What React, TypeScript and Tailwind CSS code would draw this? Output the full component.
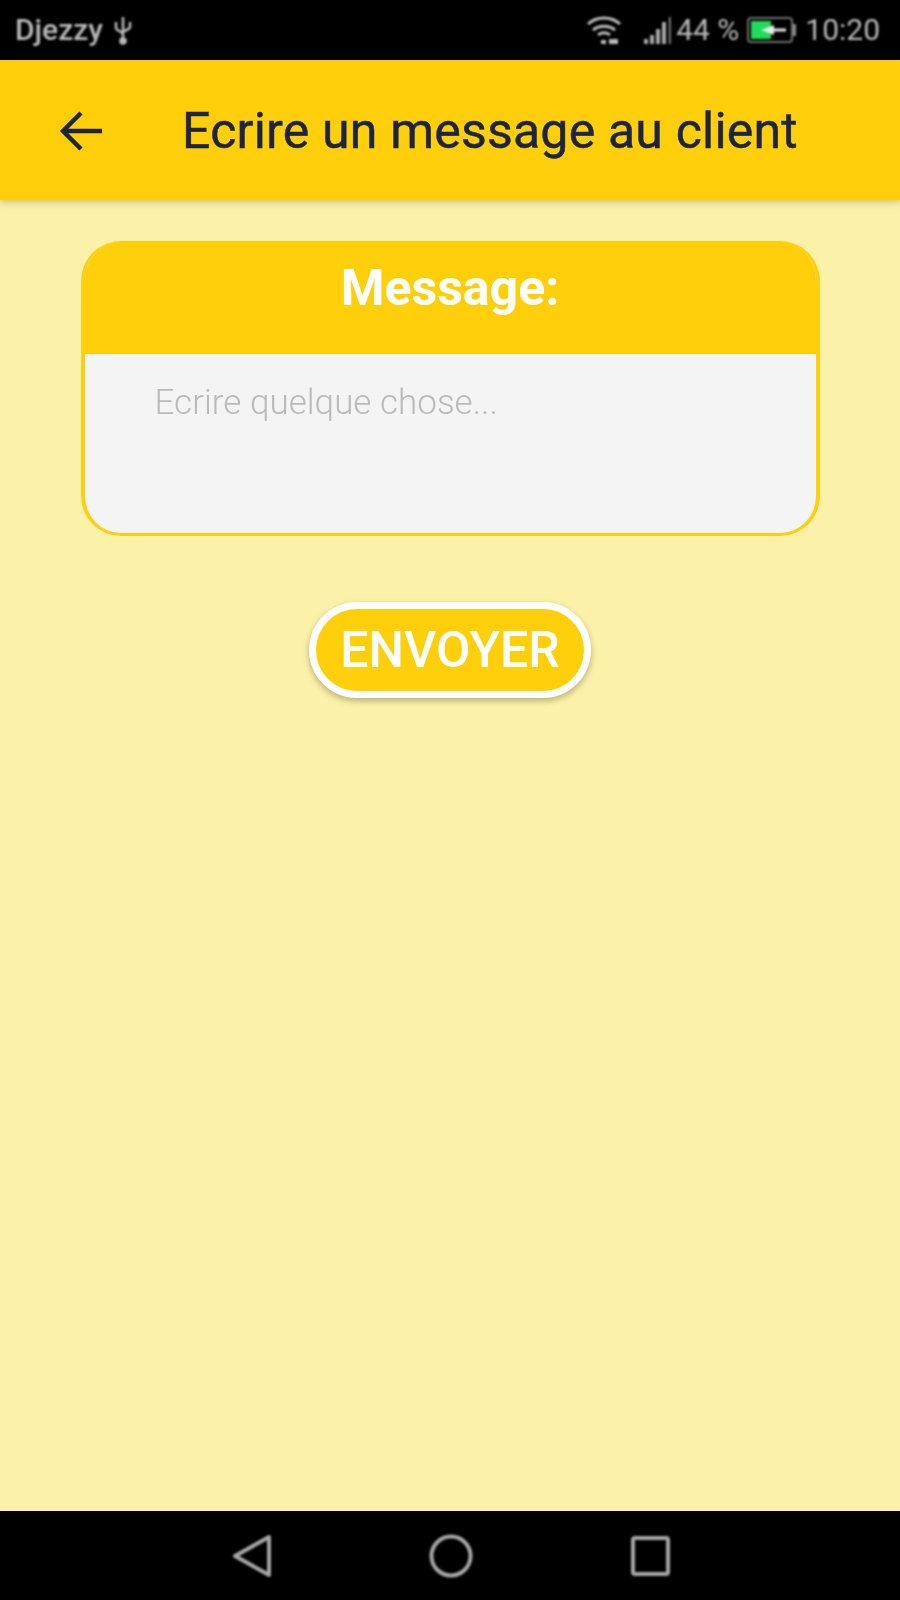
export default function App() {
  return (
    <div className="flex h-[1600px] w-[900px] flex-col overflow-hidden bg-[#fbf1a9] font-['Roboto',sans-serif]">
      {/* status bar */}
      <div className="flex h-[60px] shrink-0 items-center justify-between bg-black pl-[15px] pr-[20px] text-[#b9b9b9]">
        <div className="flex items-center gap-[10px] blur-[0.8px]">
          <span className="text-[30px] font-medium leading-none">Djezzy</span>
          <svg width="20" height="30" viewBox="0 0 20 30" fill="none" stroke="#b9b9b9" strokeWidth="2.500">
            <path d="M10 2v26M3 7v6c0 3 7 3 7 7M17 7v5c0 3-7 3-7 6" />
            <circle cx="10" cy="26" r="2.500" fill="#b9b9b9" />
          </svg>
        </div>
        <div className="flex items-center blur-[0.8px]">
          <svg width="36" height="30" viewBox="0 0 36 30" fill="none" stroke="#b9b9b9" strokeWidth="3" className="mr-[20px]">
            <path d="M2 9c9-8 23-8 32 0M7 15c6-5 16-5 22 0M12 20c3-3 9-3 12 0" />
            <path d="M15 25h5v4h-5zM23 24h9v5h-9z" fill="#b9b9b9" stroke="none" />
          </svg>
          <svg width="30" height="28" viewBox="0 0 30 28" fill="#a8a8a8" className="mr-[4px]">
            <path d="M2 28v-5h4v5zM8 28v-9h4v9zM14 28V13h4v15zM20 28V6h4v22zM27 28V1h1.500v27z" />
          </svg>
          <span className="mr-[8px] text-[30px] leading-none">44 %</span>
          <div className="mr-[9px] flex items-center">
            <div className="relative flex h-[26px] w-[46px] items-center rounded-[4px] border-2 border-[#6f6f6f] p-[2px]">
              <div className="h-full w-[20px] bg-[#1fdc5a]" />
              <svg width="26" height="12" viewBox="0 0 26 12" fill="#e8e8e8" className="absolute left-[12px] top-[5px]">
                <path d="M0 6l13-5v3.500h12v3H13V11z" />
              </svg>
            </div>
            <div className="h-[12px] w-[3px] bg-[#8a8a8a]" />
          </div>
          <span className="text-[30px] leading-none">10:20</span>
        </div>
      </div>

      {/* app bar */}
      <div className="z-10 flex h-[140px] shrink-0 items-center bg-[#ffcf0b] shadow-[0_3px_6px_rgba(90,80,40,0.25)]">
        <div className="ml-[58px] w-[124px] shrink-0 translate-y-[1px] blur-[0.6px]">
          <svg width="46" height="46" viewBox="0 0 46 46" fill="none" stroke="#1d2440" strokeWidth="4.500">
            <path d="M44 23H5M23 5L5 23l18 18" />
          </svg>
        </div>
        <span className="pt-[2px] text-[50px] leading-none tracking-[0.2px] text-[#1d2440] blur-[0.6px] [-webkit-text-stroke:0.5px_#1d2440]">
          Ecrire un message au client
        </span>
      </div>

      {/* content */}
      <div className="flex flex-1 flex-col items-center pt-[41px]">
        <div className="flex h-[295px] w-[739px] flex-col overflow-hidden rounded-[40px] border-x-[4px] border-b-[3px] border-[#ffcf14] bg-[#f4f4f4]">
          <div className="-mx-[4px] flex h-[113px] shrink-0 justify-center bg-[#ffcf0b] pt-[22px]">
            <span className="text-[50px] font-bold leading-none text-white blur-[0.6px]">Message:</span>
          </div>
          <div className="pl-[70px] pt-[31px] text-[35px] font-light leading-none text-[#bababa] blur-[0.6px]">
            Ecrire quelque chose...
          </div>
        </div>

        <button className="mt-[66px] flex h-[96px] w-[282px] items-center justify-center rounded-full border-[7px] border-white bg-[#ffcf0b] shadow-[0_3px_6px_rgba(90,80,40,0.4)]">
          <span className="text-[50px] font-medium leading-none text-white blur-[0.6px]">ENVOYER</span>
        </button>
      </div>

      {/* nav bar */}
      <div className="flex h-[89px] shrink-0 items-center justify-center bg-black pl-[22px]">
        <svg width="460" height="44" viewBox="0 0 460 44" fill="none" stroke="#a6a6a6" strokeWidth="4" strokeLinejoin="round" className="blur-[0.8px]">
          <path d="M4 22L38 3v38z" />
          <circle cx="220" cy="22" r="19.500" />
          <rect x="402" y="4" width="35" height="36" rx="2" />
        </svg>
      </div>
    </div>
  );
}
